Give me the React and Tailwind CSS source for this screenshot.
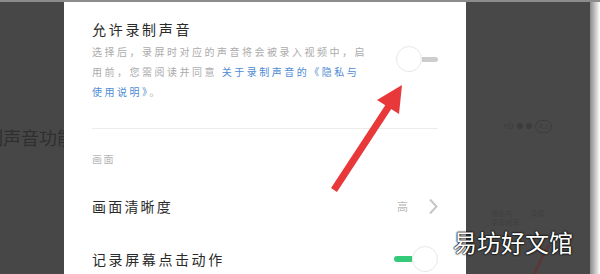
import React from 'react';

const font = "font-['Noto_Sans_CJK_SC','Noto_Sans',sans-serif]";

function ToggleOff() {
  return (
    <div className="flex items-center">
      <div className="w-[26px] h-[26px] rounded-full bg-white border border-[#e8e8e8]" />
      <div className="w-[16px] h-[5px] rounded-r-full bg-[#cdcdcd]" />
    </div>
  );
}

function ToggleOn() {
  return (
    <div className="flex items-center">
      <div className="w-[18px] h-[6px] rounded-l-full bg-[#35c97a]" />
      <div className="w-[26px] h-[26px] rounded-full bg-white border border-[#e8e8e8]" />
    </div>
  );
}

function Arrow() {
  return (
    <svg className="absolute left-0 top-0 pointer-events-none" width="600" height="274" viewBox="0 0 600 274">
      {/* faint arrow behind the dim layer */}
      <line x1="549" y1="244" x2="534" y2="274" stroke="#5a3838" strokeWidth="3" />
      <line x1="334" y1="190" x2="389" y2="106" stroke="#e8383a" strokeWidth="7" />
      <polygon points="402,85 399,114 377,100" fill="#e8383a" />
    </svg>
  );
}

export default function App() {
  return (
    <div className={`relative w-[600px] h-[274px] overflow-hidden bg-white ${font}`}>
      <div className="h-[2px] bg-[#8c8c8c]" />
      <div className="flex h-[272px]">
        {/* Left: dimmed background */}
        <div className="w-[64px] bg-[#474747] overflow-hidden pt-[124px]">
          <div className="ml-[-15px] whitespace-nowrap text-[18px] leading-[22px] text-[#2f2f2f]">制声音功能</div>
        </div>

        {/* Center: settings sheet */}
        <div className="w-[402px] bg-white px-[28px] overflow-hidden">
          <div className="flex items-start justify-between pt-[19px]">
            <div>
              <div className="text-[14px] leading-[16px] tracking-[2.7px] text-[#2a2a2a] whitespace-nowrap">允许录制声音</div>
              <div className="mt-[5px] text-[10px] leading-[20px] tracking-[2.5px] text-[#ababab] whitespace-nowrap">
                <div>选择后，录屏时对应的声音将会被录入视频中，启</div>
                <div>用前，您需阅读并同意 <span className="text-[#4f8cd6]">关于录制声音的《隐私与</span></div>
                <div><span className="text-[#4f8cd6]">使用说明》</span>。</div>
              </div>
            </div>
            <div className="mt-[25px]">
              <ToggleOff />
            </div>
          </div>

          <div className="mt-[26px] h-px bg-[#ececec]" />

          <div className="mt-[23px] text-[10px] leading-[14px] tracking-[1.5px] text-[#b5b5b5]">画面</div>

          <div className="mt-[20px] h-[40px] flex items-center justify-between">
            <div className="text-[14px] tracking-[2.2px] text-[#2a2a2a]">画面清晰度</div>
            <div className="flex items-center gap-[20px]">
              <span className="text-[11px] text-[#b8b8b8]">高</span>
              <svg width="10" height="17" viewBox="0 0 10 17" fill="none" stroke="#c6c6c6" strokeWidth="2">
                <polyline points="2,1.5 8.5,8.5 2,15.5" />
              </svg>
            </div>
          </div>

          <div className="mt-[13px] h-[40px] flex items-center justify-between">
            <div className="text-[14px] tracking-[2.6px] text-[#2a2a2a] whitespace-nowrap">记录屏幕点击动作</div>
            <ToggleOn />
          </div>
        </div>

        {/* Right: dimmed background */}
        <div className="w-[124px] bg-[#484848] flex flex-col items-center">
          <div className="mt-[118px] flex items-center gap-[3px] text-[7px] text-[#3c3c3c]">
            <span>HD</span>
            <span className="w-[6px] h-[6px] rounded-sm bg-[#3c3c3c]" />
            <span className="w-[6px] h-[6px] rounded-sm bg-[#3c3c3c]" />
            <span className="px-[3px] rounded-full border border-[#3c3c3c]">4:1</span>
          </div>
          <div className="mt-[76px] ml-[-20px] text-[7px] leading-[9px] text-[#404040]">
            <div>隐私与 · · 录屏</div>
            <div>录屏帧率</div>
          </div>
        </div>
        <div className="w-[10px] bg-linear-to-r from-[#8a8a8a] to-white" />
      </div>

      <Arrow />

      <div className="absolute left-[453px] top-[229px] text-[24px] leading-[26px] text-white whitespace-nowrap [text-shadow:0_0_2px_#000,0_0_2px_#000,0_0_1px_#000]">
        易坊好文馆
      </div>
    </div>
  );
}
